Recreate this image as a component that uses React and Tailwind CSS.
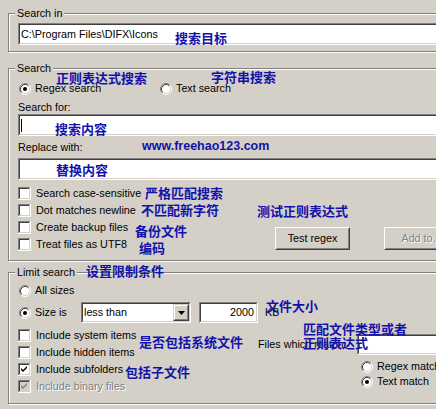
function Radio({ checked, className = '' }) {
  return (
    <svg width="12" height="12" viewBox="0 0 12 12" className={`shrink-0 ${className}`}>
      <circle cx="6" cy="6" r="5" fill="#fff" />
      <path d="M2.11 9.89A5.5 5.5 0 0 1 9.89 2.11" stroke="#808080" fill="none" />
      <path d="M9.89 2.11A5.5 5.5 0 0 1 2.11 9.89" stroke="#fff" fill="none" />
      <path d="M2.82 9.18A4.5 4.5 0 0 1 9.18 2.82" stroke="#404040" fill="none" />
      <path d="M9.18 2.82A4.5 4.5 0 0 1 2.82 9.18" stroke="#d4d0c8" fill="none" />
      {checked && <circle cx="6" cy="6" r="2" fill="#000" />}
    </svg>
  );
}

function Check({ checked, disabled }) {
  return (
    <svg width="13" height="13" viewBox="0 0 13 13" className="shrink-0">
      <rect width="13" height="13" fill="#fff" />
      <rect width="12" height="1" fill="#808080" />
      <rect width="1" height="12" fill="#808080" />
      <rect x="1" y="1" width="10" height="1" fill="#404040" />
      <rect x="1" y="1" width="1" height="10" fill="#404040" />
      <rect x="1" y="11" width="11" height="1" fill="#d4d0c8" />
      <rect x="11" y="1" width="1" height="11" fill="#d4d0c8" />
      <rect x="2" y="2" width="9" height="9" fill={disabled ? '#d4d0c8' : '#fff'} />
      {checked && <path d="M3 5L5 7L9 3V5L5 9L3 7Z" fill={disabled ? '#808080' : '#000'} />}
    </svg>
  );
}

function Sunken({ className = '', inner = '', children }) {
  return (
    <div className={`border border-t-[#808080] border-l-[#808080] border-b-white border-r-white ${className}`}>
      <div className={`h-full border border-t-[#404040] border-l-[#404040] border-b-[#d4d0c8] border-r-[#d4d0c8] bg-white flex items-center ${inner}`}>
        {children}
      </div>
    </div>
  );
}

function Button({ className = '', disabled, children }) {
  return (
    <div className={`h-[23px] w-[75px] border border-t-white border-l-white border-b-[#404040] border-r-[#404040] ${className}`}>
      <div
        className={`h-full flex items-center justify-center border border-t-[#d4d0c8] border-l-[#d4d0c8] border-b-[#808080] border-r-[#808080] ${
          disabled ? 'text-[#808080] [text-shadow:1px_1px_0_#fff]' : ''
        }`}
      >
        {children}
      </div>
    </div>
  );
}

function Group({ title, className = '', children }) {
  return (
    <fieldset className={`m-0 p-0 min-w-0 border border-[#808080] shadow-[inset_1px_1px_0_#fff,1px_1px_0_#fff] ${className}`}>
      <legend className="ml-[6px] px-[2px] h-[13px] leading-[13px] bg-[#d4d0c8]">{title}</legend>
      {children}
    </fieldset>
  );
}

function CheckRow({ label, checked, disabled }) {
  return (
    <div className="flex h-[17px] items-center gap-[5px]">
      <Check checked={checked} disabled={disabled} />
      <span className={disabled ? 'text-[#808080] [text-shadow:1px_1px_0_#fff]' : ''}>{label}</span>
    </div>
  );
}

function RadioRow({ label, checked, className = '' }) {
  return (
    <div className={`flex h-[13px] items-center gap-[4px] ${className}`}>
      <Radio checked={checked} className="ml-[1px]" />
      <span>{label}</span>
    </div>
  );
}

const note = "absolute whitespace-nowrap font-['Noto_Sans_CJK_SC',sans-serif] font-bold text-[13px] leading-[13px] text-[#1212ab]";

export default function App() {
  return (
    <div className="relative w-[436px] h-[409px] overflow-hidden bg-[#d4d0c8] font-['Liberation_Sans',Arial,sans-serif] text-[10.75px] leading-[13px] text-black">
      <div className="w-[560px] pl-2 pt-[7px]">
        <Group title="Search in">
          <div className="pt-[3px] pb-[6px] pl-[9px]">
            <Sunken className="h-[22px]">
              <span className="pl-[1px]">{'C:\\Program Files\\DIFX\\Icons'}</span>
            </Sunken>
          </div>
        </Group>

        <Group title="Search" className="mt-[10px]">
          <div className="pt-[7px] pb-[7px] pl-[9px]">
            <div className="flex h-[13px] items-center">
              <RadioRow label="Regex search" checked className="w-[141px]" />
              <RadioRow label="Text search" />
            </div>
            <div className="mt-[6px] h-[13px]">Search for:</div>
            <Sunken className="h-[22px]">
              <span className="ml-[1px] h-[13px] w-px bg-black" />
            </Sunken>
            <div className="mt-[5px] h-[13px]">Replace with:</div>
            <Sunken className="mt-[4px] h-[22px]" />
            <div className="mt-[5px] flex">
              <div className="w-[257px]">
                <CheckRow label="Search case-sensitive" />
                <CheckRow label="Dot matches newline" />
                <CheckRow label="Create backup files" />
                <CheckRow label="Treat files as UTF8" />
              </div>
              <Button className="mt-[42px]">Test regex</Button>
              <Button disabled className="ml-[34px] mt-[42px]">Add to...</Button>
            </div>
          </div>
        </Group>

        <Group title="Limit search" className="mt-[5px]">
          <div className="pt-[5px] pb-[8px] pl-[9px]">
            <RadioRow label="All sizes" />
            <div className="mt-[5px] flex h-[21px] items-center">
              <RadioRow label="Size is" checked className="w-[63px]" />
              <Sunken className="h-[21px] w-[110px]" inner="justify-between">
                <span className="pl-[1px]">less than</span>
                <div className="h-full w-[16px] border border-t-[#d4d0c8] border-l-[#d4d0c8] border-b-[#404040] border-r-[#404040] bg-[#d4d0c8]">
                  <div className="h-full flex items-center justify-center border border-t-white border-l-white border-b-[#808080] border-r-[#808080]">
                    <svg width="7" height="4" viewBox="0 0 7 4">
                      <path d="M0 0H7L3.5 4Z" fill="#000" />
                    </svg>
                  </div>
                </div>
              </Sunken>
              <Sunken className="ml-[8px] h-[21px] w-[59px]" inner="justify-end">
                <span className="pr-[2px]">2000</span>
              </Sunken>
              <span className="ml-[7px]">KB</span>
            </div>
            <div className="mt-[4px] flex">
              <div className="w-[240px]">
                <CheckRow label="Include system items" />
                <CheckRow label="Include hidden items" />
                <CheckRow label="Include subfolders" checked />
                <CheckRow label="Include binary files" checked disabled />
              </div>
              <div>
                <div className="mt-[7px] flex items-center">
                  <span className="w-[99px]">Files which match:</span>
                  <Sunken className="h-[21px] w-[140px]" />
                </div>
                <div className="ml-[103px] mt-[5px] flex flex-col gap-[2px]">
                  <div className="flex h-[13px] items-center gap-[4px]">
                    <Radio />
                    <span>Regex match</span>
                  </div>
                  <div className="flex h-[13px] items-center gap-[4px]">
                    <Radio checked />
                    <span>Text match</span>
                  </div>
                </div>
              </div>
            </div>
          </div>
        </Group>
      </div>

      <span className={`${note} left-[175px] top-[31px]`}>搜索目标</span>
      <span className={`${note} left-[56px] top-[71px]`}>正则表达式搜索</span>
      <span className={`${note} left-[211px] top-[70px]`}>字符串搜索</span>
      <span className={`${note} left-[55px] top-[122px]`}>搜索内容</span>
      <span className="absolute left-[142px] top-[139px] whitespace-nowrap font-['Liberation_Sans',Arial,sans-serif] font-bold text-[12.5px] leading-[14px] text-[#1212ab]">
        www.freehao123.com
      </span>
      <span className={`${note} left-[56px] top-[163px]`}>替换内容</span>
      <span className={`${note} left-[145px] top-[186px]`}>严格匹配搜索</span>
      <span className={`${note} left-[141px] top-[203px]`}>不匹配新字符</span>
      <span className={`${note} left-[135px] top-[224px]`}>备份文件</span>
      <span className={`${note} left-[139px] top-[241px]`}>编码</span>
      <span className={`${note} left-[257px] top-[204px]`}>测试正则表达式</span>
      <span className={`${note} left-[86px] top-[264px]`}>设置限制条件</span>
      <span className={`${note} left-[266px] top-[299px]`}>文件大小</span>
      <span className={`${note} left-[139px] top-[335px]`}>是否包括系统文件</span>
      <span className={`${note} left-[125px] top-[365px]`}>包括子文件</span>
      <span className={`${note} left-[303px] top-[322px]`}>匹配文件类型或者</span>
      <span className={`${note} left-[303px] top-[336px]`}>正则表达式</span>
    </div>
  );
}
